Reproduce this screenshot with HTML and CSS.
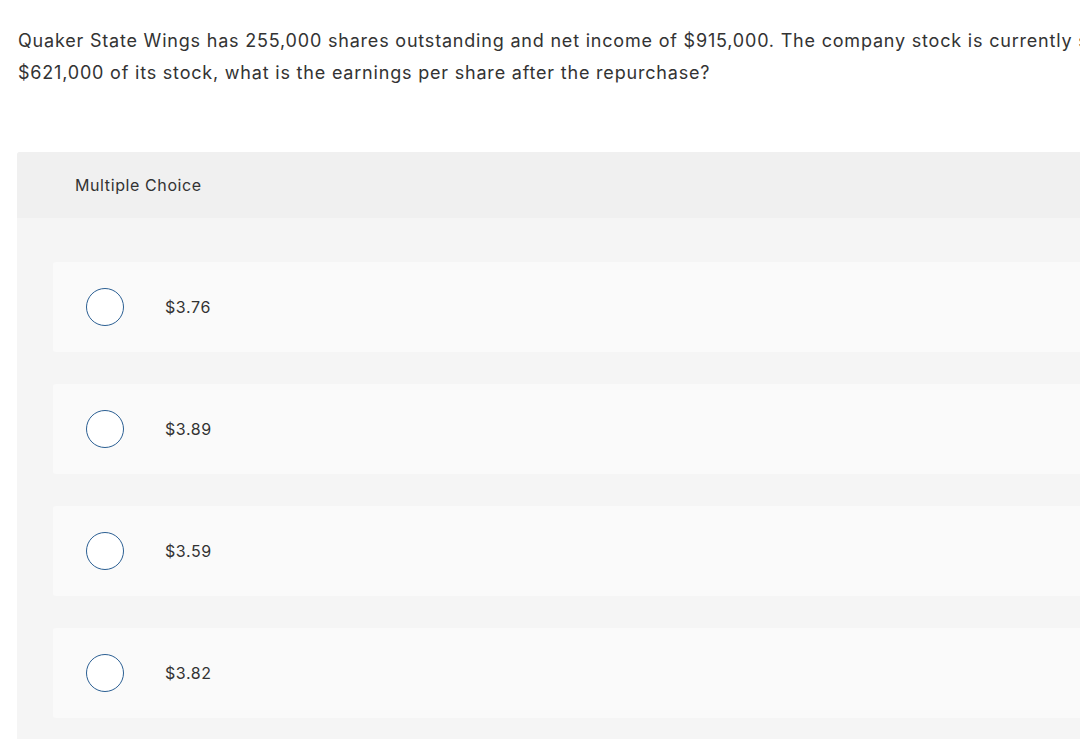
FILE: index.html
```html
<!DOCTYPE html>
<html>
<head>
<meta charset="utf-8">
<link rel="stylesheet" href="styles.css">
</head>
<body>
<div class="page">
  <div class="question">
    <span class="line">Quaker State Wings has 255,000 shares outstanding and net income of $915,000. The company stock is currently selling for $41.80 per share. If the company repurchases</span>
    <span class="line">$621,000 of its stock, what is the earnings per share after the repurchase?</span>
  </div>
  <div class="panel">
    <div class="panel-head">Multiple Choice</div>
    <div class="panel-body">
      <div class="option"><span class="radio"></span><span class="label">$3.76</span></div>
      <div class="option"><span class="radio"></span><span class="label">$3.89</span></div>
      <div class="option"><span class="radio"></span><span class="label">$3.59</span></div>
      <div class="option"><span class="radio"></span><span class="label">$3.82</span></div>
    </div>
  </div>
</div>
</body>
</html>
```
FILE: styles.css
```css
html, body {
  margin: 0;
  padding: 0;
  background: #ffffff;
  overflow: hidden;
}
.page {
  width: 1400px;
  padding: 25px 0 0 17px;
  font-family: Inter, "Open Sans", "Liberation Sans", sans-serif;
  color: #333333;
}
.question {
  padding-left: 1px;
  font-size: 18px;
  line-height: 32px;
  letter-spacing: 0.8px;
  height: 96px;
  margin-bottom: 31px;
}
.line {
  display: block;
  white-space: nowrap;
}
.panel {
  background: #f5f5f5;
  border-radius: 3px 0 0 0;
}
.panel-head {
  background: #f0f0f0;
  height: 66px;
  line-height: 66px;
  padding-left: 58px;
  font-size: 16px;
  letter-spacing: 0.6px;
  border-radius: 3px 0 0 0;
}
.panel-body {
  padding: 44px 0 30px 36px;
  display: flex;
  flex-direction: column;
  gap: 32px;
}
.option {
  height: 90px;
  background: #fafafa;
  border-radius: 3px 0 0 3px;
  display: flex;
  align-items: center;
  padding-left: 33px;
}
.radio {
  width: 36px;
  height: 36px;
  border: 1px solid #2b5f93;
  border-radius: 50%;
  background: #ffffff;
  flex: none;
}
.label {
  margin-left: 41px;
  font-size: 16px;
  letter-spacing: 0.6px;
}
```
